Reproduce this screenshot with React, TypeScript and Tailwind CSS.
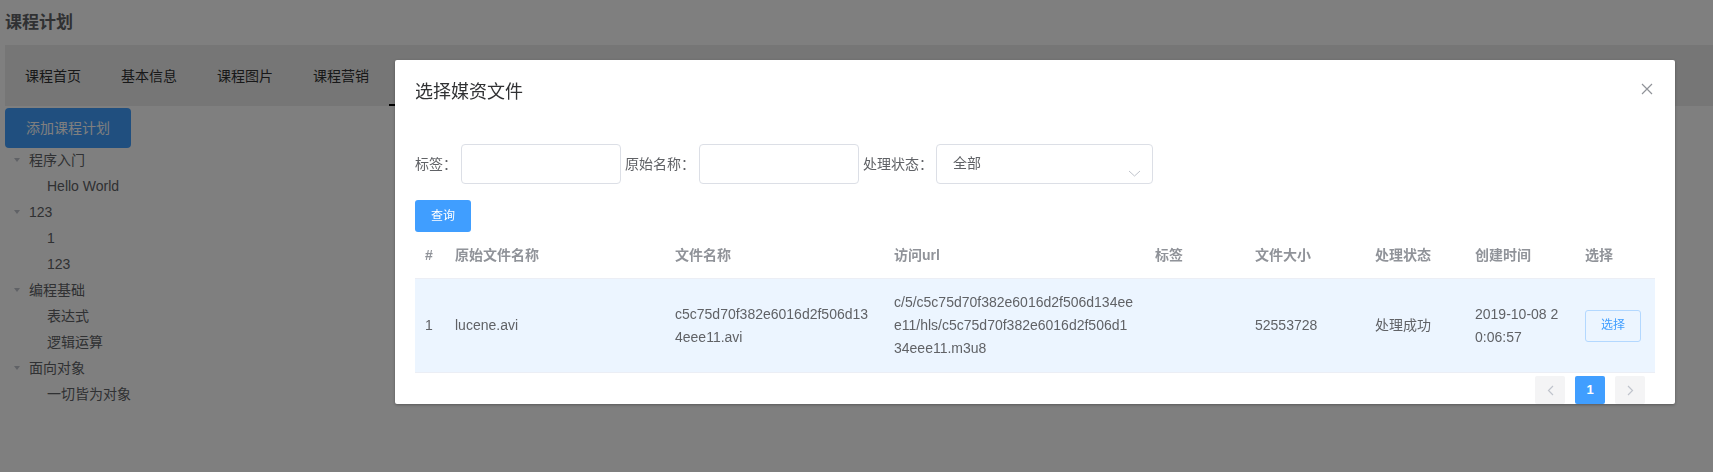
const tabs = ["课程首页", "基本信息", "课程图片", "课程营销", "课程计划"];

type TreeNode = { label: string; children?: string[] };

const tree: TreeNode[] = [
  { label: "程序入门", children: ["Hello World"] },
  { label: "123", children: ["1", "123"] },
  { label: "编程基础", children: ["表达式", "逻辑运算"] },
  { label: "面向对象", children: ["一切皆为对象"] },
];

const columns: Array<{ title: string; width: number }> = [
  { title: "#", width: 30 },
  { title: "原始文件名称", width: 220 },
  { title: "文件名称", width: 219 },
  { title: "访问url", width: 261 },
  { title: "标签", width: 100 },
  { title: "文件大小", width: 120 },
  { title: "处理状态", width: 100 },
  { title: "创建时间", width: 110 },
  { title: "选择", width: 80 },
];

const rows = [
  {
    index: 1,
    originalName: "lucene.avi",
    fileName: "c5c75d70f382e6016d2f506d134eee11.avi",
    url: "c/5/c5c75d70f382e6016d2f506d134eee11/hls/c5c75d70f382e6016d2f506d134eee11.m3u8",
    tag: "",
    size: "52553728",
    status: "处理成功",
    createdAt: "2019-10-08 20:06:57",
  },
];

function Caret() {
  return (
    <svg width="8" height="6" viewBox="0 0 8 6" className="shrink-0">
      <polygon points="1,1 7,1 4,5" fill="#c0c4cc" />
    </svg>
  );
}

function Chevron({ dir }: { dir: "left" | "right" }) {
  return (
    <svg width="7" height="11" viewBox="0 0 7 11">
      <polyline
        points={dir === "left" ? "6,1 1.5,5.5 6,10" : "1,1 5.5,5.5 1,10"}
        fill="none"
        stroke="#c0c4cc"
        strokeWidth="1.2"
      />
    </svg>
  );
}

function Background() {
  return (
    <div className="pl-[5px] text-[14px]">
      <div className="h-[45px] pt-[11px] text-[17px] font-bold leading-[24px] text-[#606266]">课程计划</div>
      <div className="flex h-[61px] bg-[#ececec]">
        {tabs.map((t, i) => (
          <div
            key={t}
            className={
              "relative flex h-full items-center px-5 pt-[2px] text-[#303133]" + (i === 4 ? " text-[#409eff]" : "")
            }
          >
            {t}
            {i === 4 ? <div className="absolute bottom-0 left-0 right-0 h-[2px] bg-black" /> : null}
          </div>
        ))}
      </div>
      <button className="mt-[2px] h-10 w-[126px] rounded-[4px] bg-[#409eff] text-[14px] text-white">添加课程计划</button>
      <div className="-mt-[1px] text-[#606266]">
        {tree.map((n) => (
          <div key={n.label}>
            <div className="flex h-[26px] items-center">
              <div className="flex w-6 justify-end pr-[8px]">
                <Caret />
              </div>
              <span>{n.label}</span>
            </div>
            {n.children?.map((c, ci) => (
              <div key={ci} className="flex h-[26px] items-center pl-[42px]">
                {c}
              </div>
            ))}
          </div>
        ))}
      </div>
    </div>
  );
}

function MediaDialog() {
  return (
    <div className="absolute left-[395px] top-[60px] w-[1280px] rounded-[2px] bg-white shadow-[0_1px_3px_rgba(0,0,0,0.3)]">
      <div className="relative px-5 pb-[10px] pt-5">
        <div className="text-[18px] leading-[24px] text-[#303133]">选择媒资文件</div>
        <button className="absolute right-[22px] top-[23px] p-0">
          <svg width="12" height="12" viewBox="0 0 12 12">
            <path d="M1 1L11 11M11 1L1 11" stroke="#909399" strokeWidth="1.2" />
          </svg>
        </button>
      </div>

      <div className="px-5 pt-[30px] text-[14px] text-[#606266]">
        <div className="flex h-10 items-center">
          <label className="w-[46px] shrink-0">标签：</label>
          <input className="h-10 w-[160px] rounded-[4px] border border-[#dcdfe6] px-[15px] outline-none" />
          <label className="ml-[4px] w-[74px] shrink-0">原始名称：</label>
          <input className="h-10 w-[160px] rounded-[4px] border border-[#dcdfe6] px-[15px] outline-none" />
          <label className="ml-[4px] w-[73px] shrink-0">处理状态：</label>
          <div className="relative -mt-[1px] flex h-10 w-[217px] items-center rounded-[4px] border border-[#dcdfe6] pl-[16px]">
            <span>全部</span>
            <svg className="absolute right-[11px] top-[25px]" width="13" height="7" viewBox="0 0 13 7">
              <polyline points="1,1 6.5,6 12,1" fill="none" stroke="#c0c4cc" strokeWidth="1" />
            </svg>
          </div>
        </div>

        <button className="mt-4 h-8 w-14 rounded-[3px] bg-[#409eff] text-[12px] text-white">查询</button>

        <table className="w-full table-fixed border-collapse leading-[23px]">
          <colgroup>
            {columns.map((c) => (
              <col key={c.title} style={{ width: c.width }} />
            ))}
          </colgroup>
          <thead>
            <tr>
              {columns.map((c) => (
                <th
                  key={c.title}
                  className="border-b border-[#ebeef5] px-[10px] pb-[11px] pt-3 text-left font-bold text-[#909399]"
                >
                  {c.title}
                </th>
              ))}
            </tr>
          </thead>
          <tbody>
            {rows.map((r) => (
              <tr key={r.index} className="bg-[#ecf5ff]">
                <td className="border-b border-[#ebeef5] px-[10px] py-3 align-middle">{r.index}</td>
                <td className="border-b border-[#ebeef5] px-[10px] py-3 align-middle break-all">{r.originalName}</td>
                <td className="border-b border-[#ebeef5] px-[10px] py-3 align-middle break-all">{r.fileName}</td>
                <td className="border-b border-[#ebeef5] px-[10px] py-3 align-middle break-all">{r.url}</td>
                <td className="border-b border-[#ebeef5] px-[10px] py-3 align-middle">{r.tag}</td>
                <td className="border-b border-[#ebeef5] px-[10px] py-3 align-middle">{r.size}</td>
                <td className="border-b border-[#ebeef5] px-[10px] py-3 align-middle">{r.status}</td>
                <td className="border-b border-[#ebeef5] px-[10px] py-3 align-middle break-all">{r.createdAt}</td>
                <td className="border-b border-[#ebeef5] px-[10px] py-3 align-middle">
                  <button className="h-8 w-14 rounded-[3px] border border-[#b3d8ff] bg-[#ecf5ff] text-[12px] text-[#409eff]">
                    选择
                  </button>
                </td>
              </tr>
            ))}
          </tbody>
        </table>

        <div className="flex justify-end gap-[10px] pr-[10px] pt-[3px]">
          <button className="flex h-7 w-[30px] items-center justify-center rounded-[2px] bg-[#f4f4f5]">
            <Chevron dir="left" />
          </button>
          <button className="h-7 w-[30px] rounded-[2px] bg-[#409eff] text-[13px] font-bold text-white">1</button>
          <button className="flex h-7 w-[30px] items-center justify-center rounded-[2px] bg-[#f4f4f5]">
            <Chevron dir="right" />
          </button>
        </div>
      </div>
    </div>
  );
}

export default function App() {
  return (
    <div className="relative h-[472px] w-[1713px] overflow-hidden bg-white font-['Liberation_Sans','Noto_Sans_CJK_SC',sans-serif]">
      <Background />
      <div className="fixed inset-0 bg-black/50" />
      <MediaDialog />
    </div>
  );
}
